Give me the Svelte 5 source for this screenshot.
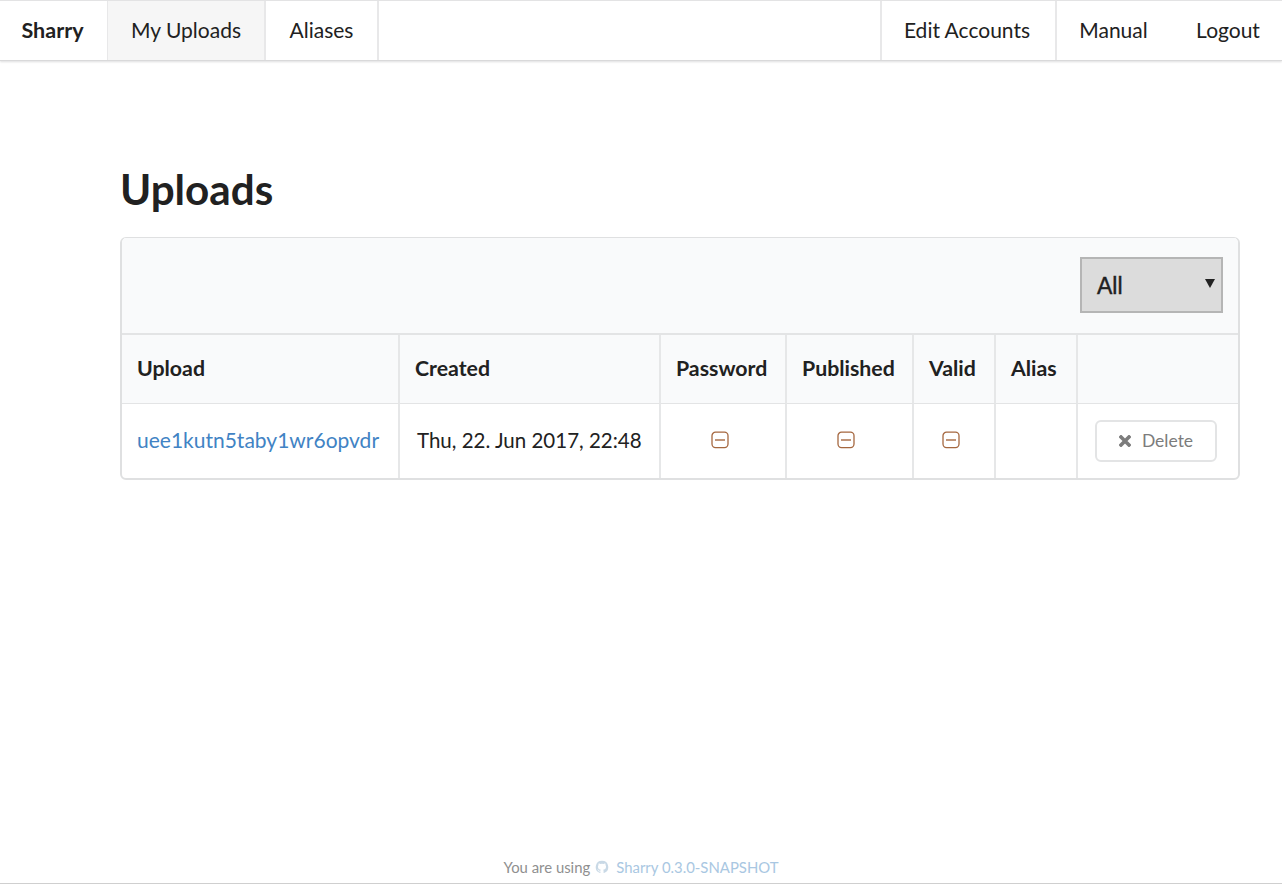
<script>
  const columns = ['Upload', 'Created', 'Password', 'Published', 'Valid', 'Alias', ''];
</script>

<div class="page">
  <nav class="menu">
    <a class="item brand" href="#home">Sharry</a>
    <a class="item active uploads" href="#uploads">My Uploads</a>
    <a class="item aliases" href="#aliases">Aliases</a>
    <div class="right">
      <a class="item edit" href="#accounts">Edit Accounts</a>
      <a class="item manual" href="#manual">Manual</a>
      <a class="item logout" href="#logout">Logout</a>
    </div>
  </nav>

  <main class="content">
    <h1>Uploads</h1>
    <div class="panel">
      <div class="toolbar">
        <div class="select"><span>All</span><i class="caret"></i></div>
      </div>
      <table>
        <colgroup>
          <col class="c1" /><col class="c2" /><col class="c3" /><col class="c4" /><col class="c5" /><col class="c6" /><col />
        </colgroup>
        <thead>
          <tr>
            {#each columns as c}<th>{c}</th>{/each}
          </tr>
        </thead>
        <tbody>
          <tr>
            <td><a class="link" href="#upload">uee1kutn5taby1wr6opvdr</a></td>
            <td class="date">Thu, 22. Jun 2017, 22:48</td>
            {#each [0, 1, 2] as i (i)}
              <td class="center">
                <svg class="minus" viewBox="0 0 18 18" width="18" height="18" aria-hidden="true">
                  <rect x="1" y="1.200" width="16" height="15.400" rx="3.500" fill="none" stroke="#a5673f" stroke-width="1.300" />
                  <path d="M4 9h10" stroke="#a5673f" stroke-width="1.400" />
                </svg>
              </td>
            {/each}
            <td></td>
            <td class="action">
              <button type="button">
                <svg viewBox="0 0 12 12" width="12" height="12" aria-hidden="true">
                  <path d="M2 2l8 8M10 2l-8 8" stroke="#7c7c7c" stroke-width="3.600" stroke-linecap="square" />
                </svg>
                <span>Delete</span>
              </button>
            </td>
          </tr>
        </tbody>
      </table>
    </div>
  </main>

  <footer>
    <span>You are using</span>
    <svg viewBox="0 0 16 16" width="14" height="14" aria-hidden="true">
      <path fill="#c9d9e6" d="M8 .8a7.2 7.2 0 0 0-2.3 14c.4.1.5-.1.5-.3v-1.3c-2 .4-2.4-.9-2.4-.9-.3-.8-.8-1-.8-1-.7-.4 0-.4 0-.4.7 0 1.1.7 1.1.7.6 1.100 1.700.8 2.100.6.1-.5.3-.8.5-1-1.600-.2-3.300-.8-3.300-3.500 0-.8.300-1.400.700-1.900-.1-.2-.3-.9.100-1.900 0 0 .600-.2 2 .7a7 7 0 0 1 3.600 0c1.400-.9 2-.7 2-.7.400 1 .200 1.700.100 1.900.500.500.700 1.100.700 1.900 0 2.700-1.700 3.300-3.300 3.500.300.200.500.700.500 1.300v2c0 .200.100.400.500.300A7.200 7.200 0 0 0 8 .8z" />
    </svg>
    <a href="#sharry">Sharry 0.3.0-SNAPSHOT</a>
  </footer>
</div>

<style>
  :global(body) {
    margin: 0;
    background: #fff;
    font-family: Lato, "Liberation Sans", sans-serif;
    color: #212121;
  }
  a { text-decoration: none; color: inherit; }
  .page { height: 884px; display: flex; flex-direction: column; box-sizing: border-box; }

  .menu {
    display: flex;
    height: 61px;
    box-sizing: border-box;
    border-top: 1px solid #e3e3e4;
    border-bottom: 1px solid #d9d9da;
    box-shadow: 0 1px 2px rgba(34, 36, 38, 0.15);
    font-size: 21px;
  }
  .item {
    display: flex;
    align-items: center;
    justify-content: center;
    box-sizing: border-box;
    border-right: 2px solid #e8e8e9;
    padding-bottom: 2px;
  }
  .brand { width: 108px; font-weight: 700; font-size: 21.500px; border-right: 1px solid #e8e8e9; padding-right: 2px; }
  .uploads { width: 158px; background: #f6f6f6; }
  .aliases { width: 113px; }
  .right { margin-left: auto; display: flex; }
  .edit { width: 177px; border-left: 2px solid #e8e8e9; padding-right: 3px; }
  .manual { width: 116px; border-right: 0; padding-right: 3px; }
  .logout { width: 109px; border-right: 0; padding-left: 1px; }

  .content { margin: 0 42px 0 120px; flex: 1; }
  h1 {
    margin: 100px 0 0;
    font-size: 42.200px;
    line-height: 56px;
    font-weight: 700;
    height: 76px;
  }
  .panel {
    border: 1px solid #dfe0e1;
    border-left-width: 2px;
    border-bottom-width: 2px;
    border-right-width: 2px;
    border-radius: 6px;
    overflow: hidden;
    box-sizing: border-box;
    height: 243px;
  }
  .toolbar {
    height: 97px;
    box-sizing: border-box;
    background: #f9fafb;
    border-bottom: 2px solid #e3e4e5;
    display: flex;
    justify-content: flex-end;
    align-items: center;
    padding-right: 15px;
    padding-bottom: 2px;
  }
  .select {
    width: 143px;
    height: 56px;
    box-sizing: border-box;
    border: 2px solid #b5b5b5;
    background: #dcdcdc;
    display: flex;
    align-items: center;
    justify-content: space-between;
    padding: 0 6px 0 15px;
    font-size: 23px;
    font-family: "Liberation Sans", Arial, sans-serif;
    -webkit-text-stroke: 0.400px #212121;
  }
  .select span { padding-top: 4px; }
  .caret {
    width: 0;
    height: 0;
    border-left: 5px solid transparent;
    border-right: 5px solid transparent;
    border-top: 9px solid #222;
    margin-bottom: 2px;
  }
  table {
    width: 100%;
    border-collapse: separate;
    border-spacing: 0;
    table-layout: fixed;
    font-size: 21px;
  }
  .c1 { width: 278px; }
  .c2 { width: 261px; }
  .c3 { width: 126px; }
  .c4 { width: 127px; }
  .c5 { width: 82px; }
  .c6 { width: 82px; }
  th {
    height: 69px;
    box-sizing: border-box;
    text-align: left;
    padding: 0 0 2px 15px;
    background: #f9fafb;
    font-weight: 700;
    font-size: 21.300px;
    border-right: 2px solid #e6e7e8;
    border-bottom: 1px solid #e3e4e5;
  }
  td {
    height: 75px;
    box-sizing: border-box;
    padding: 0 0 4px 15px;
    border-right: 2px solid #e6e7e8;
  }
  th:last-child, td:last-child { border-right: 0; }
  .link { color: #4183c4; }
  .date { padding-left: 17px; font-size: 20.500px; }
  td.center { text-align: center; padding: 0 7px 3px 0; }
  .minus { display: block; margin: 0 auto; }
  td.action { padding: 0 0 2px 17px; }
  button {
    width: 122px;
    height: 42px;
    display: flex;
    align-items: center;
    justify-content: center;
    gap: 11px;
    background: #fff;
    border: 2px solid #e3e4e5;
    border-radius: 6px;
    color: #7c7c7c;
    font: 400 17.500px Lato, sans-serif;
    padding: 0;
  }
  footer {
    height: 32px;
    box-sizing: border-box;
    border-bottom: 1px solid #cfcfcf;
    display: flex;
    justify-content: center;
    align-items: center;
    gap: 5px;
    font-size: 14.900px;
    color: #8f8f8f;
    padding-bottom: 1px;
  }
  footer a { color: #a9c7e2; margin-left: 2px; }
</style>
